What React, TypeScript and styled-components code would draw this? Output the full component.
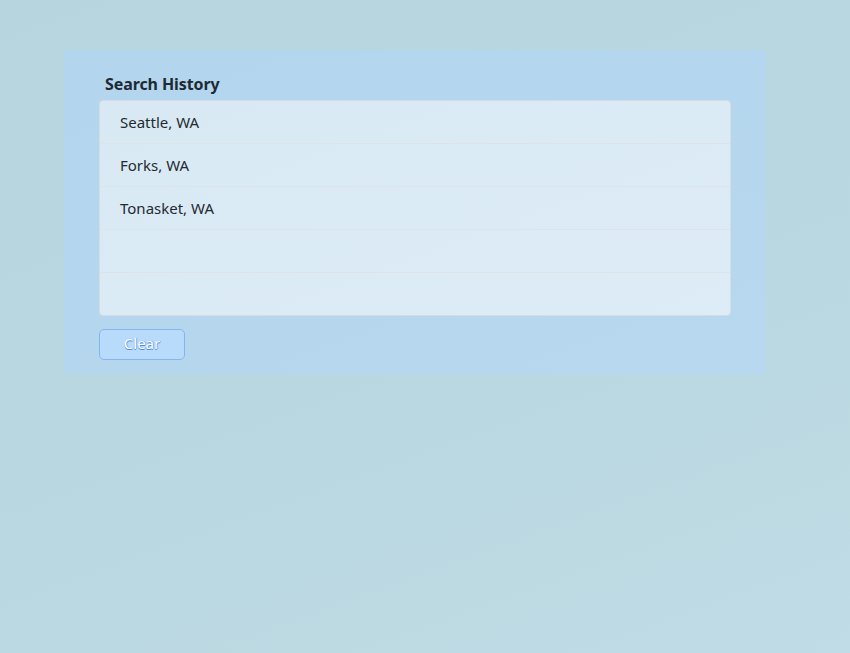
import React from "react";
import styled, { createGlobalStyle } from "styled-components";

const Global = createGlobalStyle`
  html, body { margin: 0; padding: 0; }
  body {
    min-height: 653px;
    background: linear-gradient(160deg, #b6d5df 0%, #bad8e1 60%, #c0dce6 100%);
    font-family: "Noto Sans", "Open Sans", sans-serif;
  }
`;

const Page = styled.div`
  padding: 50px 84px 0 64px;
`;

const Panel = styled.section`
  width: 702px;
  box-sizing: border-box;
  padding: 23px 35px 14px 35px;
  background: linear-gradient(160deg, #b3d5ee 0%, #b7d8ee 100%);
  border-radius: 3px;
`;

const Title = styled.h2`
  margin: 0 0 4px 6px;
  font-size: 16px;
  line-height: 23px;
  font-weight: 700;
  letter-spacing: -0.1px;
  color: #1e2a33;
`;

const List = styled.ul`
  list-style: none;
  margin: 0;
  padding: 0;
  background: linear-gradient(160deg, #d9e9f4 0%, #ddecf6 100%);
  border: 1px solid #d3dde4;
  border-radius: 4px;
  overflow: hidden;
`;

const Row = styled.li<{ $last?: boolean }>`
  height: 42px;
  display: flex;
  align-items: center;
  padding-left: 20px;
  font-size: 15px;
  color: #1f2a31;
  border-bottom: ${(p) => (p.$last ? "none" : "1px solid #dde3e6")};
`;

const ClearButton = styled.button`
  margin-top: 13px;
  width: 86px;
  height: 31px;
  padding: 0 0 3px 0;
  border: 1px solid #83b6ef;
  border-radius: 5px;
  background: #b9dbfb;
  color: #ffffff;
  font-family: "Noto Sans", "Open Sans", sans-serif;
  font-size: 15px;
  text-shadow: 0 1px 0 #4a8fde, 1px 0 1px #6aa4e6;
  cursor: pointer;
`;

const items = ["Seattle, WA", "Forks, WA", "Tonasket, WA", "", ""];

export default function App() {
  return (
    <>
      <Global />
      <Page>
        <Panel>
          <Title>Search History</Title>
          <List>
            {items.map((t, i) => (
              <Row key={i} $last={i === items.length - 1}>
                {t}
              </Row>
            ))}
          </List>
          <ClearButton>Clear</ClearButton>
        </Panel>
      </Page>
    </>
  );
}
